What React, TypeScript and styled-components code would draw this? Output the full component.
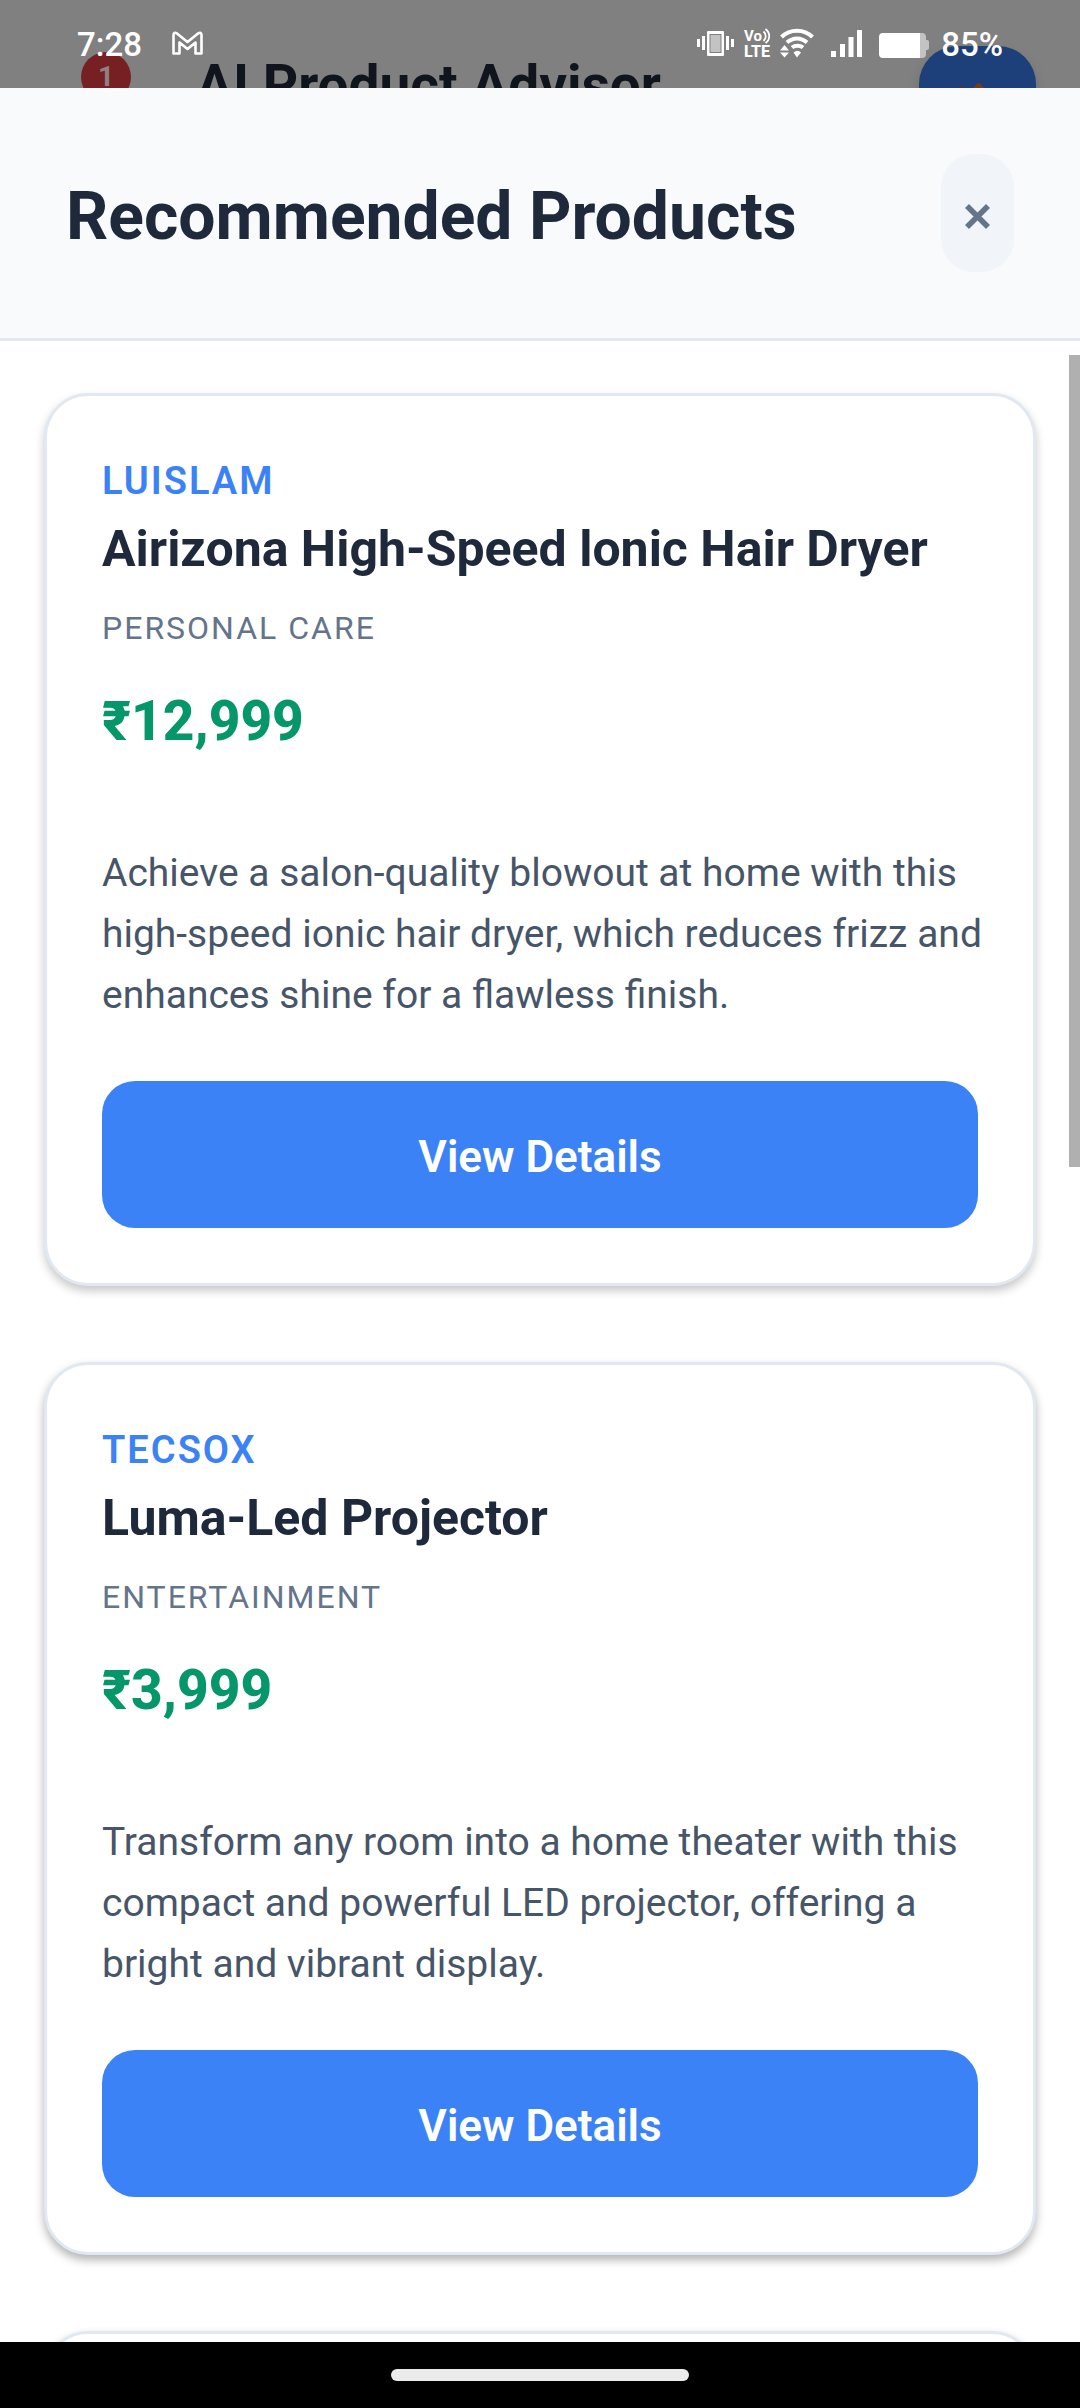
import React from 'react';
import styled, { createGlobalStyle } from 'styled-components';

const GlobalStyle = createGlobalStyle`
  *, *::before, *::after { box-sizing: border-box; }
  body { margin: 0; background: #000; font-family: Roboto, "Noto Sans", sans-serif; }
  h1, h2, h3, p, ul { margin: 0; padding: 0; }
  button { border: 0; padding: 0; font: inherit; cursor: pointer; }
`;

const Screen = styled.div`
  display: flex;
  flex-direction: column;
  height: 100vh;
  overflow: hidden;
`;

const TopStrip = styled.div`
  display: grid;
  grid-template-columns: minmax(0, 1fr);
  grid-template-rows: 88px;
  flex: none;
  overflow: hidden;
  background: #808080;

  > * { grid-area: 1 / 1; }
`;

const AppHeader = styled.div`
  display: flex;
  align-items: flex-start;
  padding: 46px 44px 0 81px;
`;

const CountBadge = styled.span`
  width: 50px;
  height: 50px;
  margin-top: 6px;
  border-radius: 50%;
  background: #762024;
  color: #8f8083;
  font-size: 28px;
  font-weight: 700;
  line-height: 50px;
  text-align: center;
`;

const AppTitle = styled.h1`
  flex: 1;
  margin: 6px 0 0 65px;
  color: #0f141d;
  font-size: 55px;
  font-weight: 700;
  line-height: 66px;
  white-space: nowrap;
`;

const ChatButton = styled.button`
  display: flex;
  justify-content: center;
  flex: none;
  width: 117px;
  height: 117px;
  padding-top: 36px;
  border-radius: 38px;
  background: #1d407a;
  box-shadow: 0 6px 12px rgba(0, 0, 0, 0.15);
`;

const StatusBar = styled.div`
  display: flex;
  align-items: flex-start;
  padding: 25px 77px 0 77px;
  color: #fff;
  font-size: 33px;
  font-weight: 500;
  line-height: 40px;
`;

const StatusIcons = styled.div`
  display: flex;
  align-items: flex-start;
  gap: 9px;
  margin-left: auto;

  svg { display: block; margin-top: 3px; }
`;

const BatteryLevel = styled.span`
  margin-left: 3px;
`;

const MailIcon = styled.svg`
  display: block;
  margin: 5px 0 0 30px;
`;

const Sheet = styled.main`
  position: relative;
  display: flex;
  flex-direction: column;
  flex: 1;
  min-height: 0;
  background: #fff;
`;

const SheetHeader = styled.header`
  display: flex;
  align-items: center;
  justify-content: space-between;
  flex: none;
  padding: 66px;
  border-bottom: 3px solid #e2e8f0;
  background: #f8fafc;
`;

const SheetTitle = styled.h2`
  padding-top: 8px;
  color: #1e293b;
  font-size: 66px;
  font-weight: 700;
  line-height: 78px;
`;

const CloseButton = styled.button`
  display: flex;
  align-items: center;
  justify-content: center;
  width: 73px;
  height: 118px;
  padding-top: 6px;
  border-radius: 33px;
  background: #f1f5f9;
  color: #64748b;
`;

const ProductList = styled.ul`
  display: flex;
  flex-direction: column;
  gap: 76px;
  flex: 1;
  min-height: 0;
  overflow: hidden;
  padding: 52px 44px 0;
  list-style: none;
`;

const Card = styled.li<{ $shade: number }>`
  display: flex;
  flex-direction: column;
  flex: none;
  padding: 55px;
  border: 3px solid #e2e8f0;
  border-radius: 44px;
  background: #fff;
  box-shadow: 0 5px 10px rgba(0, 0, 0, ${(p) => p.$shade});
`;

const Brand = styled.p`
  color: #3b82f6;
  font-size: 38px;
  font-weight: 600;
  letter-spacing: 2px;
  line-height: 60px;
  text-transform: uppercase;
`;

const ProductName = styled.h3`
  margin-top: 5px;
  color: #1e293b;
  font-size: 50px;
  font-weight: 700;
  line-height: 66px;
`;

const Category = styled.p`
  margin-top: 24px;
  color: #64748b;
  font-size: 32px;
  letter-spacing: 2px;
  line-height: 44px;
  text-transform: uppercase;
`;

const Price = styled.p`
  margin-top: 38px;
  color: #059669;
  font-size: 55px;
  font-weight: 800;
  line-height: 66px;
`;

const Description = styled.p`
  margin: 89px -8px 0 0;
  color: #475569;
  font-size: 39px;
  line-height: 61px;
`;

const DetailsButton = styled.button`
  height: 147px;
  margin-top: 55px;
  padding-top: 4px;
  border-radius: 33px;
  background: #3b82f6;
  color: #fff;
  font-size: 44px;
  font-weight: 600;
`;

const ScrollThumb = styled.div`
  position: absolute;
  top: 267px;
  right: 0;
  width: 11px;
  height: 812px;
  background: #b0b0b0;
`;

const NavBar = styled.div`
  display: flex;
  align-items: center;
  justify-content: center;
  flex: none;
  height: 66px;
  background: #000;
`;

const NavHandle = styled.div`
  width: 298px;
  height: 12px;
  border-radius: 6px;
  background: #ebebeb;
`;

interface Product {
  brand: string;
  name: string;
  category: string;
  price: string;
  description: string;
  shade: number;
}

const products: Product[] = [
  {
    brand: 'Luislam',
    name: 'Airizona High-Speed lonic Hair Dryer',
    category: 'Personal Care',
    price: '₹12,999',
    description:
      'Achieve a salon-quality blowout at home with this high-speed ionic hair dryer, which reduces frizz and enhances shine for a flawless finish.',
    shade: 0.22,
  },
  {
    brand: 'Tecsox',
    name: 'Luma-Led Projector',
    category: 'Entertainment',
    price: '₹3,999',
    description:
      'Transform any room into a home theater with this compact and powerful LED projector, offering a bright and vibrant display.',
    shade: 0.3,
  },
];

const Vibrate = () => (
  <svg width="38" height="28" viewBox="0 0 38 28" fill="#fff" aria-hidden="true">
    <rect x="0" y="11" width="3" height="8" />
    <rect x="5" y="8" width="3" height="14" />
    <rect x="10" y="3" width="17" height="25" rx="1" />
    <rect x="12.5" y="6" width="12" height="19" fill="#808080" />
    <rect x="13.5" y="7" width="10" height="17" fill="#c3c3c3" />
    <rect x="29" y="8" width="3" height="14" />
    <rect x="34" y="11" width="3" height="8" />
  </svg>
);

const VoLte = () => (
  <svg width="27" height="30" viewBox="0 0 27 30" overflow="visible" aria-hidden="true">
    <g fill="#fff" fontFamily="Roboto, sans-serif">
      <text x="0" y="13" fontSize="15" fontWeight="700">Vo</text>
      <text x="0" y="29" fontSize="16" fontWeight="800">LTE</text>
    </g>
    <g fill="none" stroke="#fff" strokeWidth="1.8">
      <path d="M19.500 3.500c3 2.500 3 7 0 9.500" />
      <path d="M21.500 1c5 4 5 10.500 0 14" />
    </g>
  </svg>
);

const Wifi = () => (
  <svg width="34" height="30" viewBox="0 0 34 30" aria-hidden="true">
    <g fill="none" stroke="#fff" strokeWidth="4">
      <path d="M1.500 9C10 0.500 24 0.500 32.500 9" />
      <path d="M7 14.500c6-5.500 14-5.500 20 0" />
      <path d="M12 19.500c3-2.500 8-2.500 11 0" />
    </g>
    <path d="M13.500 24.500q4-3.500 7.500 0L17 29.500z" fill="#fff" />
    <path d="M0 22.500L4.500 17L9 22.500zM0 24.500h9L4.500 29.500z" fill="#fff" />
  </svg>
);

const Signal = () => (
  <svg width="31" height="30" viewBox="0 0 31 30" fill="#fff" aria-hidden="true">
    <rect x="0" y="23" width="5" height="6" />
    <rect x="9" y="16" width="5" height="13" />
    <rect x="17.500" y="9" width="5" height="20" />
    <rect x="26" y="2" width="5" height="27" />
  </svg>
);

const Battery = () => (
  <svg width="50" height="30" viewBox="0 0 50 30" aria-hidden="true">
    <path
      d="M36 5h7q4 0 4 4v3h1q2 0 2 2v6q0 2-2 2h-1v4q0 4-4 4h-7z"
      fill="#c3c3c3"
    />
    <path d="M4 5h37v25H4q-4 0-4-4V9q0-4 4-4z" fill="#fff" />
  </svg>
);

const SignalGroup = styled.div`
  display: flex;
  gap: 17px;
`;

export default function App() {
  return (
    <>
      <GlobalStyle />
      <Screen>
        <TopStrip>
          <AppHeader>
            <CountBadge>1</CountBadge>
            <AppTitle>AI Product Advisor</AppTitle>
            <ChatButton aria-label="Open advisor">
              <svg width="50" height="40" viewBox="0 0 50 40" aria-hidden="true">
                <path d="M18.500 8L24.500 1.500Q25.500 0.500 27 1.500L33 8L40 16H12z" fill="#7a3b1c" />
                <path d="M4 8l3-3.500h4l-2 5z" fill="#6b2a2c" />
              </svg>
            </ChatButton>
          </AppHeader>
          <StatusBar>
            <span>7:28</span>
            <MailIcon width="31" height="28" viewBox="0 0 31 28" aria-hidden="true">
              <path
                d="M1.500 5Q1.500 1.500 5 3.500L15.500 12L26 3.500Q29.500 1.500 29.500 5V23.500H23.500V12.500L15.500 19L7.500 12.500V23.500H1.500z"
                fill="none"
                stroke="#fff"
                strokeWidth="2.6"
                strokeLinejoin="round"
              />
            </MailIcon>
            <StatusIcons>
              <Vibrate />
              <VoLte />
              <SignalGroup>
                <Wifi />
                <Signal />
                <Battery />
              </SignalGroup>
              <BatteryLevel>85%</BatteryLevel>
            </StatusIcons>
          </StatusBar>
        </TopStrip>
        <Sheet>
          <SheetHeader>
            <SheetTitle>Recommended Products</SheetTitle>
            <CloseButton aria-label="Close">
              <svg width="25" height="25" viewBox="0 0 25 25" aria-hidden="true">
                <path d="M2 2L23 23M23 2L2 23" stroke="currentColor" strokeWidth="5.6" />
              </svg>
            </CloseButton>
          </SheetHeader>
          <ProductList>
            {products.map((p) => (
              <Card key={p.name} $shade={p.shade}>
                <Brand>{p.brand}</Brand>
                <ProductName>{p.name}</ProductName>
                <Category>{p.category}</Category>
                <Price>{p.price}</Price>
                <Description>{p.description}</Description>
                <DetailsButton>View Details</DetailsButton>
              </Card>
            ))}
            <Card $shade={0.3} />
          </ProductList>
          <ScrollThumb />
        </Sheet>
        <NavBar>
          <NavHandle />
        </NavBar>
      </Screen>
    </>
  );
}
